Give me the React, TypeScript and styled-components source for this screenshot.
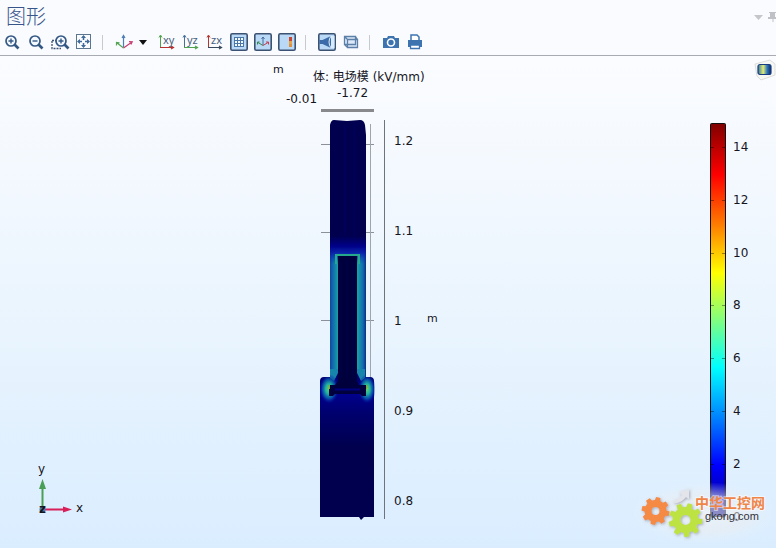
import React from "react";
import styled, { createGlobalStyle } from "styled-components";

const plotFont = '"DejaVu Sans", "Noto Sans CJK SC", sans-serif';
const latin = '"Noto Sans", "Noto Sans CJK SC", sans-serif';

const GlobalStyle = createGlobalStyle`
  *, *::before, *::after { box-sizing: border-box; }
  body { margin: 0; background: #fafbff; font-family: ${latin}; color: #222; }
  svg { display: block; }
`;

const Window = styled.div`
  display: flex;
  flex-direction: column;
  min-height: 100vh;
  overflow: hidden;
`;

const Header = styled.header`
  background: #fafbff;
  border-bottom: 1px solid #a9abb3;
`;

const TitleRow = styled.div`
  display: flex;
  align-items: center;
  justify-content: space-between;
  padding-left: 6px;
`;

const Title = styled.h1`
  margin: 0;
  padding-top: 3px;
  font: 300 20px/26px "Noto Sans CJK SC", sans-serif;
  color: #38558b;
`;

const WindowActions = styled.div`
  display: flex;
  padding-top: 4px;
  margin-right: -4px;
`;

const WindowButton = styled.button`
  width: 14px;
  height: 20px;
  padding: 4px 2px;
  border: 0;
  background: none;
`;

const Toolbar = styled.div`
  display: flex;
  align-items: center;
  height: 26px;
`;

const Tool = styled.button<{ $narrow?: boolean }>`
  display: grid;
  place-items: center;
  flex: none;
  width: ${(p) => (p.$narrow ? 12 : 24)}px;
  height: 24px;
  margin-left: ${(p) => (p.$narrow ? 1 : 0)}px;
  margin-right: ${(p) => (p.$narrow ? 6 : 0)}px;
  padding: 0;
  border: 0;
  background: none;
`;

const Separator = styled.span`
  width: 1px;
  height: 15px;
  margin: 0 9px 0 6px;
  background: #c9cad0;
`;

const Stage = styled.main`
  position: relative;
  flex: 1;
  display: grid;
  grid-template-columns: 265fr 180px 331fr;
  background: linear-gradient(#fbfcff, #ebf5fe 50%, #daedff);
`;

const TriadCell = styled.div`
  align-self: end;
  padding: 0 0 28px 30px;
`;

const LegendCell = styled.aside`
  display: flex;
  justify-content: flex-end;
  align-items: flex-start;
  padding: 59px 11px 0 0;
`;

const PlotSvg = styled.svg`
  font-family: ${plotFont};
  font-size: 12px;
  fill: #15151d;
`;

const Badge = styled.div`
  position: absolute;
  top: 3px;
  right: 0;
`;

const Watermark = styled.div`
  position: absolute;
  right: 4px;
  bottom: 4px;
`;

const Icon = ({ children }: { children: React.ReactNode }) => (
  <svg width="20" height="20" viewBox="0 0 20 20" fill="none" aria-hidden="true">{children}</svg>
);

const Lens = ({ x = 9, y = 9, plus = false }) => (
  <g stroke="#345884">
    <circle cx={x} cy={y} r="5" strokeWidth="1.7" fill="#f4f9ff" />
    <path d={`M${x + 3.5} ${y + 3.5}l4 4`} strokeWidth="2.6" />
    <path d={`M${x - 2.5} ${y}h5${plus ? `M${x} ${y - 2.5}v5` : ""}`} strokeWidth="1.4" />
  </g>
);

const ActiveFrame = () => (
  <rect x="1.8" y="1.8" width="16.4" height="16.4" rx="1.5" fill="#b9d9f7" stroke="#3c5272" strokeWidth="1.6" />
);

const ViewPlane = ({ label, up, across }: { label: string; up: string; across: string }) => (
  <Icon>
    <path d="M3.5 16V4M2 5.5 3.5 3 5 5.5" stroke={up} />
    <path d="M3 15.5h13M14 14l2.5 1.5L14 17" stroke={across} strokeWidth="1.2" />
    <text x="6" y="12" fontSize="11" fontFamily="Noto Sans, sans-serif" fill="#49617c">{label}</text>
  </Icon>
);

const Axes3 = () => (
  <Icon>
    <path d="M9.5 15V4M8 6l1.5-2.5L11 6" stroke="#4b7fb5" strokeWidth="1.2" />
    <path d="M9.5 16 2.500 10.500M2.500 13.5v-3l3 .3" stroke="#56a556" strokeWidth="1.2" />
    <path d="m9.5 16 8.500-6M15 9.700l3.200.2-1.300 2.700" stroke="#c73c71" strokeWidth="1.2" />
  </Icon>
);

const jet: [number, string][] = [
  [0, "#800000"], [13, "#ff0000"], [25, "#ff7400"], [38, "#ffff00"],
  [50, "#80ff80"], [62, "#00ffff"], [75, "#0080ff"], [87, "#0000ff"], [100, "#000080"],
];

const legendTicks = [14, 12, 10, 8, 6, 4, 2, 0];

const ColorLegend = () => (
  <PlotSvg width="60" height="410" viewBox="705 115 60 410" role="img" aria-label="kV/mm">
    <defs>
      <linearGradient id="jet" x2="0" y2="1">
        {jet.map(([at, c]) => <stop key={at} offset={`${at}%`} stopColor={c} />)}
      </linearGradient>
    </defs>
    <rect x="710.5" y="123.5" width="15" height="393" rx="1" fill="url(#jet)" stroke="#101010" />
    {legendTicks.map((v, i) => {
      const y = Math.round(147 + i * 52.8);
      return (
        <g key={v}>
          <path d={`M711 ${y}.5h3M722 ${y}.5h3`} stroke="#00000066" />
          <text x="733" y={y + 4}>{v}</text>
        </g>
      );
    })}
  </PlotSvg>
);

const yTicks: [string, number][] = [["1.2", 145], ["1.1", 235], ["1", 325], ["0.9", 415], ["0.8", 505]];

const FieldPlot = () => (
  <PlotSvg width="180" height="470" viewBox="265 56 180 470" role="img" aria-label="电场模">
    <defs>
      <linearGradient id="rodGlow">
        <stop offset="0" stopColor="#0d4a9c" />
        <stop offset=".08" stopColor="#1268b0" />
        <stop offset=".22" stopColor="#18a0a4" />
        <stop offset=".5" stopColor="#0a70a0" />
        <stop offset=".77" stopColor="#18a0a4" />
        <stop offset=".92" stopColor="#1268b0" />
        <stop offset="1" stopColor="#0a2f84" />
      </linearGradient>
      <linearGradient id="fadeTop" x2="0" y2="1">
        <stop offset="0" stopColor="#00004f" />
        <stop offset=".35" stopColor="#000088" />
        <stop offset=".6" stopColor="#0818a8" stopOpacity=".9" />
        <stop offset="1" stopColor="#0838b8" stopOpacity="0" />
      </linearGradient>
      <linearGradient id="base" x2="0" y2="1">
        <stop offset="0" stopColor="#000060" />
        <stop offset=".13" stopColor="#000090" />
        <stop offset=".28" stopColor="#00006e" />
        <stop offset=".5" stopColor="#00004f" />
      </linearGradient>
      <radialGradient id="hot">
        <stop offset="0" stopColor="#60d070" />
        <stop offset=".35" stopColor="#20b0a0" />
        <stop offset=".65" stopColor="#0860b0" stopOpacity=".8" />
        <stop offset="1" stopColor="#0000a0" stopOpacity="0" />
      </radialGradient>
      <clipPath id="body">
        <path d="M320 517V381l4-4h6V125l3-5h29l3 5v252h6l4 4v136z" />
      </clipPath>
    </defs>

    <text x="273" y="73" fontSize="11">m</text>
    <text x="313" y="81">体: 电场模 (kV/mm)</text>
    <text x="337" y="97">-1.72</text>
    <text x="286" y="103">-0.01</text>
    <text x="427" y="322" fontSize="11">m</text>
    {yTicks.map(([label, y]) => <text key={label} x="394" y={y}>{label}</text>)}

    <path d="M321 110.5h53" stroke="#88898c" strokeWidth="3" />
    <path d="M321 144.5h53M321 232.5h53M321 320.5h53" stroke="#8b9099" />
    <path d="M370.5 124v254" stroke="#a0a5ad" />
    <path d="M384.5 120v399" stroke="#6e747c" />

    <path d="M330 248V125q1-5 4-5l13 1 13-1q4 0 5 5l1 10v113z" fill="#00004f" />
    <path d="M345 124v112M354 122v114" stroke="#000062" />
    <rect x="330" y="248" width="36" height="132" fill="url(#rodGlow)" />
    <rect x="330" y="236" width="36" height="28" fill="url(#fadeTop)" />
    <path d="M336 264v-9h23v9" stroke="#25a88c" strokeWidth="2" fill="none" />
    <path d="M320 517V381q0-4 4-4h6l2-5h30l3 5h5q4 0 4 4v136h-10l-3 3-2-3z" fill="url(#base)" />
    <g clipPath="url(#body)">
      <path d="M330 378v-9h8v4l-4 8zM357 369h8v9l-4 3-4-8z" fill="#1784ac" />
      <ellipse cx="329" cy="389" rx="10" ry="15" fill="url(#hot)" />
      <ellipse cx="367" cy="389" rx="9" ry="15" fill="url(#hot)" />
    </g>
    <path d="M338 256h19v125l2 4h7v11h-4l-2-2h-25l-2 2h-4v-11h6l3-4z" fill="#00003c" />
    <path d="M335 389.500h25" stroke="#000080" strokeWidth="2" />
    <path d="M329.500 385v4M366.500 385v4" stroke="#a0a020" />
    <path d="M341 262v116M347 260v118M353 262v116" stroke="#00004c" />
  </PlotSvg>
);

const Triad = () => (
  <PlotSvg width="60" height="60" viewBox="30 460 60 60" role="img" aria-label="x y z">
    <path d="M42.500 509v-22" stroke="#489f55" strokeWidth="2" />
    <path d="M42.500 479l3.500 10h-7z" fill="#489f55" />
    <path d="M43 509.500h21" stroke="#d81f58" strokeWidth="2" />
    <path d="M72 509.500l-9-3v6z" fill="#d81f58" />
    <circle cx="42.500" cy="509.500" r="3" fill="#4c7ba5" />
    <text x="38" y="473">y</text>
    <text x="76" y="512">x</text>
    <text x="39" y="513" fontWeight="700">z</text>
  </PlotSvg>
);

const gearPath = (cx: number, cy: number, outer: number, inner: number, hole: number, teeth: number, turn: number) => {
  const step = (Math.PI * 2) / teeth;
  const at = (r: number, a: number) => `${(cx + r * Math.cos(a)).toFixed(1)} ${(cy + r * Math.sin(a)).toFixed(1)}`;
  const points: string[] = [];
  for (let i = 0; i < teeth; i++) {
    const a = i * step + turn;
    points.push(at(inner, a - step * 0.32), at(outer, a - step * 0.2), at(outer, a + step * 0.2), at(inner, a + step * 0.32));
  }
  return `M${points.join("L")}ZM${cx - hole} ${cy}a${hole} ${hole} 0 1 0 ${hole * 2} 0a${hole} ${hole} 0 1 0 ${-hole * 2} 0Z`;
};

const SiteLogo = () => (
  <svg width="142" height="64" viewBox="630 480 142 64" role="img" aria-label="gkong.com">
    <defs>
      <radialGradient id="haze">
        <stop offset="0" stopColor="#f4f4f4" stopOpacity=".6" />
        <stop offset=".6" stopColor="#ededed" stopOpacity=".5" />
        <stop offset="1" stopColor="#eef4f8" stopOpacity="0" />
      </radialGradient>
      <filter id="shade" x="-20%" y="-20%" width="150%" height="150%">
        <feDropShadow dx="1" dy="1" stdDeviation="1.500" floodColor="#667" floodOpacity=".5" />
      </filter>
    </defs>
    <ellipse cx="705" cy="513" rx="74" ry="31" fill="url(#haze)" />
    <g filter="url(#shade)">
      <path d={gearPath(655.5, 511, 14, 11, 4, 8, 0.2)} fill="#f58a45" fillRule="evenodd" />
      <path d={gearPath(685.5, 520, 17, 13, 5, 9, 0.1)} fill="#bde342" fillRule="evenodd" />
      <path d="M673 501q6-1 9-6l-3-3 10-3v10l-3-2q-5 6-12 6z" fill="#e3e5ea" />
    </g>
    <text x="695" y="508" fontSize="14" fontWeight="700" fontFamily="Noto Sans CJK SC, sans-serif" fill="#f08548" stroke="#fff" strokeOpacity=".5" strokeWidth="2" paintOrder="stroke">中华工控网</text>
    <text x="705" y="520" fontSize="11" fontFamily="Liberation Sans, sans-serif" fill="#30323b">gkong.com</text>
  </svg>
);

export default function App() {
  return (
    <Window>
      <GlobalStyle />
      <Header>
        <TitleRow>
          <Title>图形</Title>
          <WindowActions>
            <WindowButton aria-label="菜单">
              <svg width="10" height="10"><path d="M0 3h9L4.500 8z" fill="#c5c6ca" /></svg>
            </WindowButton>
            <WindowButton aria-label="固定">
              <svg width="10" height="10"><path d="M1 0h7v1H7v4h2v2H5.500v3h-1V7H0V5h2V1H1z" fill="#bfc1c6" /></svg>
            </WindowButton>
          </WindowActions>
        </TitleRow>
        <Toolbar role="toolbar">
          <Tool aria-label="放大"><Icon><Lens plus /></Icon></Tool>
          <Tool aria-label="缩小"><Icon><Lens /></Icon></Tool>
          <Tool aria-label="缩放框">
            <Icon>
              <path d="M2 9v7.500h9M2 8.500h4" stroke="#3c526e" strokeWidth="1.300" strokeDasharray="2 1" />
              <Lens x={11} y={9} plus />
            </Icon>
          </Tool>
          <Tool aria-label="缩放到窗口大小">
            <Icon>
              <rect x="2.500" y="2.500" width="14" height="14" stroke="#5d7690" />
              <path d="M9.500 4v4M9.500 11v4M4 9.500h4M11 9.500h4" stroke="#3f6a9a" strokeWidth="1.500" />
              <path d="M9.500 3 12 6H7zM9.500 16 12 13H7zM3 9.500 6 7v5zM16 9.500 13 7v5z" fill="#3f6a9a" />
            </Icon>
          </Tool>
          <Separator />
          <Tool aria-label="默认视图"><Axes3 /></Tool>
          <Tool $narrow aria-label="视图菜单">
            <svg width="8" height="5"><path d="M0 0h8L4 5z" fill="#111" /></svg>
          </Tool>
          <Tool aria-label="xy 视图"><ViewPlane label="xy" up="#4fa34d" across="#b8322e" /></Tool>
          <Tool aria-label="yz 视图"><ViewPlane label="yz" up="#456f9e" across="#4fa34d" /></Tool>
          <Tool aria-label="zx 视图"><ViewPlane label="zx" up="#b8322e" across="#38495d" /></Tool>
          <Tool aria-label="显示栅格" aria-pressed="true">
            <Icon>
              <ActiveFrame />
              <rect x="5" y="5" width="10" height="10" fill="#f5faff" />
              <path d="M5.500 5v10M8.500 5v10M11.500 5v10M14.500 5v10M5 5.500h10M5 8.500h10M5 11.500h10M5 14.500h10" stroke="#4a76a8" />
            </Icon>
          </Tool>
          <Tool aria-label="显示坐标轴" aria-pressed="true">
            <Icon>
              <ActiveFrame />
              <path d="M10 13V5M8.500 7 10 5l1.500 2" stroke="#456f9e" />
              <path d="M10 13.500 5 10.500M4.500 12.500v-2.500h2" stroke="#37884d" />
              <path d="m10 13.500 5-3M13 10h2.500v2.500" stroke="#c73c50" />
            </Icon>
          </Tool>
          <Tool aria-label="显示图例" aria-pressed="true">
            <Icon>
              <ActiveFrame />
              <path d="M12 5h3v5h-3z" fill="#c9452f" />
              <path d="M12 9h3v3h-3z" fill="#e8a440" />
              <path d="M12 12h3v3h-3z" fill="#e0903c" />
            </Icon>
          </Tool>
          <Separator />
          <Tool aria-label="场景光" aria-pressed="true">
            <Icon>
              <ActiveFrame />
              <path d="M2.500 8h3L14 4v12L5.500 12h-3z" fill="#3b6ca9" />
              <path d="M14 4q-4 6 0 12" stroke="#dceeff" />
              <path d="M14 4h3.500v12H14z" fill="#d8ebfd" />
            </Icon>
          </Tool>
          <Tool aria-label="透明">
            <Icon>
              <path d="M3.500 4.500h11v8h-11zM6.500 7.500h10v8h-10zM3.500 4.500l3 3M14.500 4.500l2 3M3.500 12.500l3 3" stroke="#5c80a8" strokeWidth="1.300" fill="#c8def599" />
            </Icon>
          </Tool>
          <Separator />
          <Tool aria-label="图像快照">
            <Icon>
              <path d="M2 6h4l1-2h6l1 2h4v10H2z" fill="#3d74b0" />
              <circle cx="10" cy="10.500" r="3.500" fill="#3d74b0" stroke="#fff" strokeWidth="1.600" />
            </Icon>
          </Tool>
          <Tool aria-label="打印">
            <Icon>
              <path d="M6 9V3h6l2 2v4" fill="#fff" stroke="#3d74b0" strokeWidth="1.500" />
              <path d="M3 8h14v7H3z" fill="#3d74b0" />
              <path d="M5.500 13h9v3.500h-9z" fill="#fff" stroke="#3d74b0" strokeWidth="1.300" />
            </Icon>
          </Tool>
        </Toolbar>
      </Header>
      <Stage>
        <TriadCell><Triad /></TriadCell>
        <FieldPlot />
        <LegendCell><ColorLegend /></LegendCell>
        <Badge>
          <svg width="22" height="22" viewBox="0 0 22 22" aria-hidden="true">
            <defs>
              <linearGradient id="badge">
                <stop offset="0" stopColor="#2f76a8" />
                <stop offset=".4" stopColor="#e6ec70" />
                <stop offset=".7" stopColor="#2c77be" />
                <stop offset="1" stopColor="#10245c" />
              </linearGradient>
            </defs>
            <path d="M1 5 16 1l5 4v11L7 21l-4-4z" fill="#f7f7f4" stroke="#dddeda" />
            <rect x="4" y="5.500" width="13" height="10" rx="2" fill="url(#badge)" stroke="#173c82" strokeWidth="1.200" />
          </svg>
        </Badge>
        <Watermark><SiteLogo /></Watermark>
      </Stage>
    </Window>
  );
}
